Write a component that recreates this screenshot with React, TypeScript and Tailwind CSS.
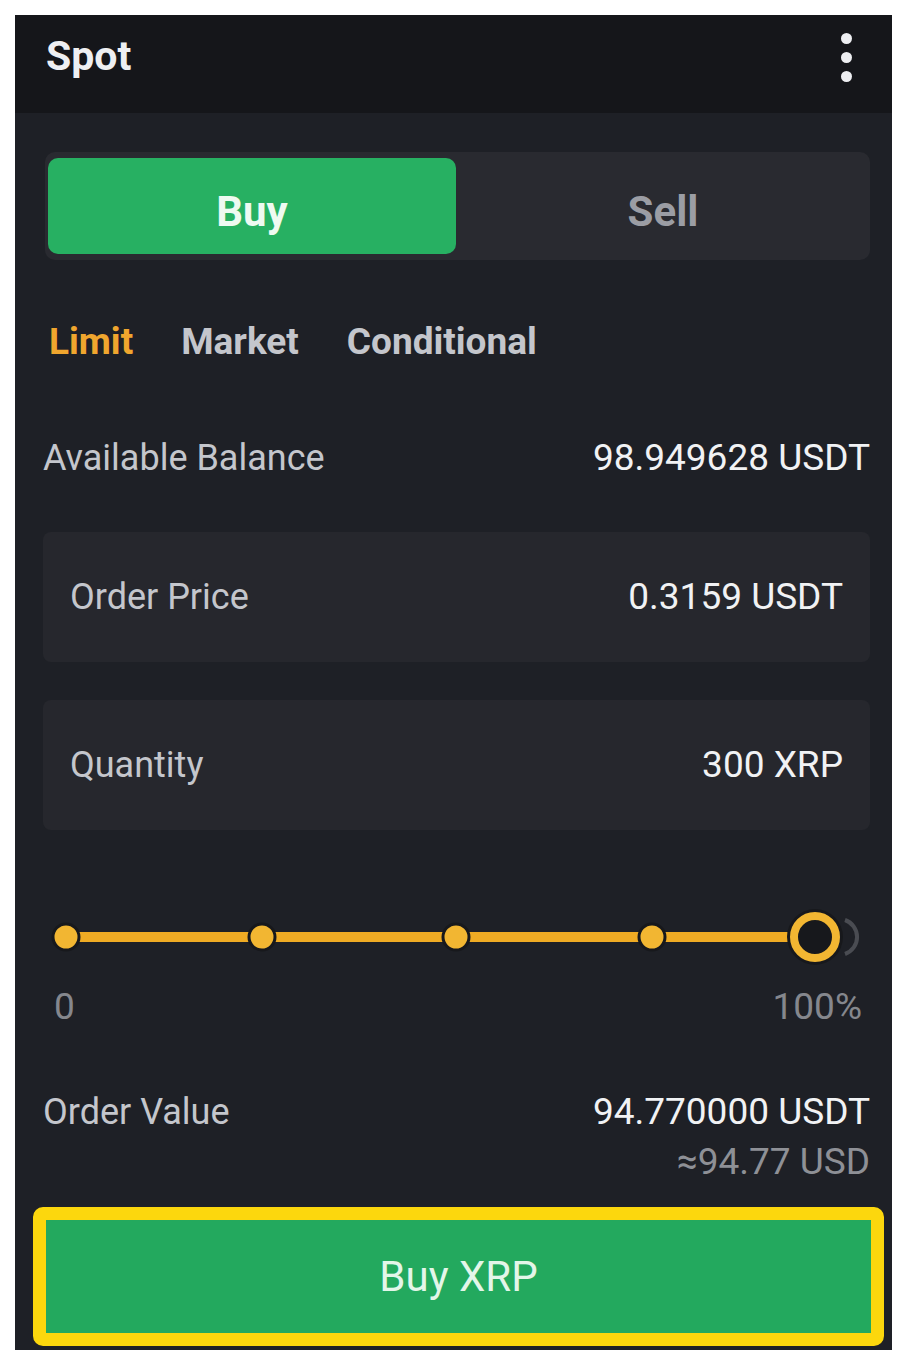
import React from 'react';

const font = { fontFamily: 'Roboto, "Liberation Sans", sans-serif' };

function Slider() {
  const dots = [23, 219, 413, 609];
  return (
    <svg width="827" height="60" viewBox="0 0 827 60" className="block">
      <line x1="23" y1="30" x2="772" y2="30" stroke="#efab24" strokeWidth="10" />
      {dots.map((x) => (
        <circle key={x} cx={x} cy="30" r="13" fill="#f2b632" stroke="#17181c" strokeWidth="3" />
      ))}
      <path d="M 802 13 A 18 18 0 0 1 802 47" fill="none" stroke="#4a4c52" strokeWidth="4" />
      <circle cx="772" cy="30" r="28" fill="#17181c" />
      <circle cx="772" cy="30" r="21" fill="#17181c" stroke="#f2b632" strokeWidth="8" />
    </svg>
  );
}

export default function App() {
  return (
    <div className="w-[906px] h-[1366px] bg-white pt-[15px] pl-[15px]" style={font}>
      <div className="w-[877px] h-[1335px] bg-[#1e2026] flex flex-col">
        <div className="h-[98px] bg-[#15161a] flex items-center justify-between pl-[31px] pr-[40px] pb-[14px]">
          <span className="text-[41px] font-bold text-[#eeeff2]">Spot</span>
          <div className="flex flex-col gap-[8px]">
            <span className="w-[11px] h-[11px] rounded-full bg-[#eeeff2]" />
            <span className="w-[11px] h-[11px] rounded-full bg-[#eeeff2]" />
            <span className="w-[11px] h-[11px] rounded-full bg-[#eeeff2]" />
          </div>
        </div>

        <div className="pl-[28px] pr-[22px] flex flex-col">
          <div className="mt-[39px] h-[108px] bg-[#292a30] rounded-[10px] flex p-[6px] pl-[3px] pr-0 ml-[2px]">
            <div className="w-[408px] bg-[#27b062] rounded-[10px] flex items-center justify-center pt-[10px]">
              <span className="text-[42px] font-bold text-[#eefaf1]">Buy</span>
            </div>
            <div className="flex-1 flex items-center justify-center pt-[10px]">
              <span className="text-[42px] font-bold text-[#9b9da4]">Sell</span>
            </div>
          </div>

          <div className="mt-[62px] h-[40px] flex items-center gap-[48px] pl-[6px] text-[37px] font-bold">
            <span className="text-[#f0a62e]">Limit</span>
            <span className="text-[#c4c6cc]">Market</span>
            <span className="text-[#c4c6cc]">Conditional</span>
          </div>

          <div className="mt-[76px] h-[40px] flex items-center justify-between">
            <span className="text-[36px] text-[#c4c6cc]">Available Balance</span>
            <span className="text-[37px] text-[#f1f2f4]">98.949628 USDT</span>
          </div>

          <div className="mt-[54px] h-[130px] bg-[#26272d] rounded-[8px] flex items-center justify-between pl-[27px] pr-[27px]">
            <span className="text-[36px] text-[#c4c6cc]">Order Price</span>
            <span className="text-[37px] text-[#f1f2f4]">0.3159 USDT</span>
          </div>

          <div className="mt-[38px] h-[130px] bg-[#26272d] rounded-[8px] flex items-center justify-between pl-[27px] pr-[27px]">
            <span className="text-[36px] text-[#c4c6cc]">Quantity</span>
            <span className="text-[37px] text-[#f1f2f4]">300 XRP</span>
          </div>

          <div className="mt-[77px]">
            <Slider />
          </div>

          <div className="mt-[20px] h-[40px] flex items-center justify-between pl-[11px] pr-[8px] text-[37px] text-[#85878d]">
            <span>0</span>
            <span>100%</span>
          </div>

          <div className="mt-[65px] h-[40px] flex items-center justify-between">
            <span className="text-[36px] text-[#c4c6cc]">Order Value</span>
            <span className="text-[37px] text-[#f1f2f4]">94.770000 USDT</span>
          </div>
          <div className="mt-[10px] h-[40px] flex items-center justify-end text-[37px] text-[#8e9096]">
            <span>≈94.77 USD</span>
          </div>
        </div>

        <div className="mt-[25px] ml-[18px] w-[851px] h-[139px] border-[13px] border-[#fcd70d] rounded-[10px] bg-[#23a95e] flex items-center justify-center">
          <span className="text-[42px] text-[#e3f6e9]">Buy XRP</span>
        </div>
      </div>
    </div>
  );
}
